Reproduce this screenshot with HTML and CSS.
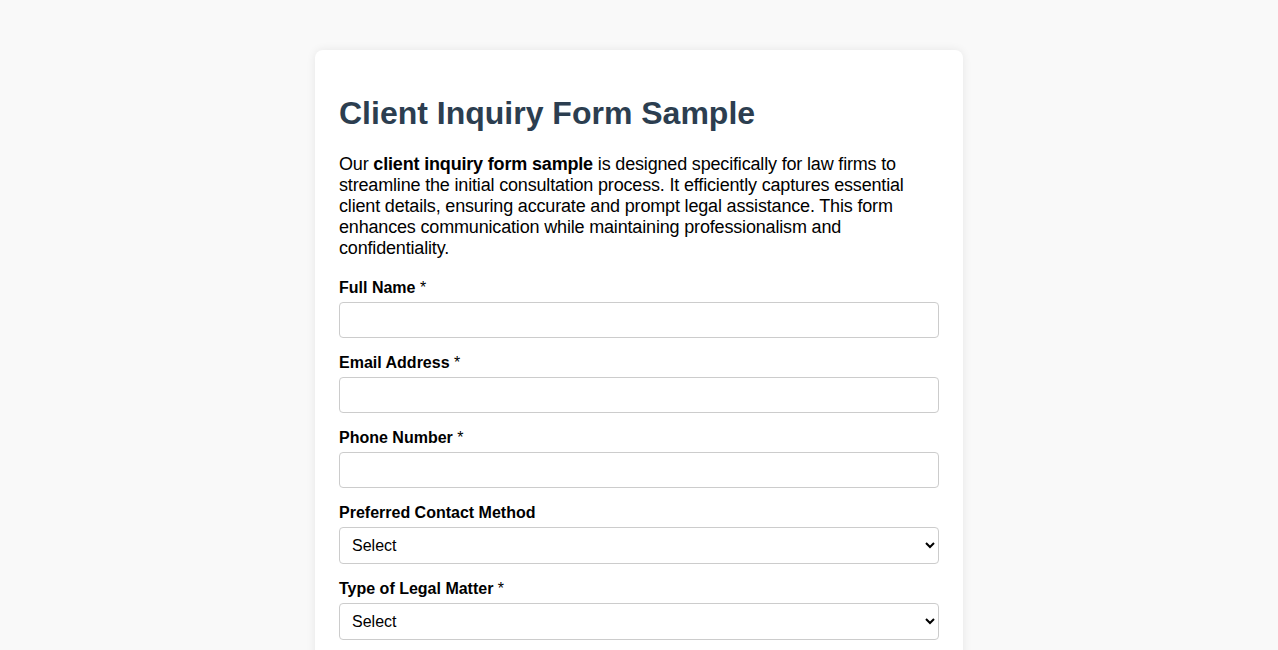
FILE: index.html
```html
<!DOCTYPE html>
<html lang="en">
<head>
<meta charset="utf-8">
<title>Client Inquiry Form Sample</title>
<link rel="stylesheet" href="styles.css">
</head>
<body>
<div class="container">
  <h1 class="title">Client Inquiry Form Sample</h1>
  <p class="intro">Our <strong>client inquiry form sample</strong> is designed specifically for law firms to streamline the initial consultation process. It efficiently captures essential client details, ensuring accurate and prompt legal assistance. This form enhances communication while maintaining professionalism and confidentiality.</p>
  <form class="form">
    <div class="group">
      <label class="label" for="name">Full Name <span class="req">*</span></label>
      <input class="field" type="text" id="name">
    </div>
    <div class="group">
      <label class="label" for="email">Email Address <span class="req">*</span></label>
      <input class="field" type="email" id="email">
    </div>
    <div class="group">
      <label class="label" for="phone">Phone Number <span class="req">*</span></label>
      <input class="field" type="tel" id="phone">
    </div>
    <div class="group">
      <label class="label" for="contact">Preferred Contact Method</label>
      <select class="field select" id="contact">
        <option>Select</option>
        <option>Email</option>
        <option>Phone</option>
      </select>
    </div>
    <div class="group">
      <label class="label" for="matter">Type of Legal Matter <span class="req">*</span></label>
      <select class="field select" id="matter">
        <option>Select</option>
        <option>Family Law</option>
        <option>Criminal Law</option>
      </select>
    </div>
    <div class="group">
      <label class="label" for="desc">Description of Issue <span class="req">*</span></label>
      <textarea class="field" id="desc" rows="4"></textarea>
    </div>
  </form>
</div>
</body>
</html>
```
FILE: styles.css
```css
body {
  margin: 0;
  padding: 20px;
  background: #f9f9f9;
  font-family: "Liberation Sans", Arial, sans-serif;
  color: #000;
}
.container {
  max-width: 600px;
  margin: 30px auto;
  padding: 24px;
  background: #fff;
  border-radius: 8px;
  box-shadow: 0 0 10px rgba(0, 0, 0, 0.08);
}
.title {
  font-size: 32px;
  color: #2c3e50;
  margin: 21px 0 22px;
}
.intro {
  font-size: 18px;
  line-height: 21px;
  letter-spacing: -0.17px;
  margin: 22px 0 20px;
}
.group {
  margin-bottom: 16px;
}
.label {
  display: block;
  font-weight: bold;
  font-size: 16px;
  margin-bottom: 5px;
}
.req {
  font-weight: normal;
}
.field {
  display: block;
  width: 100%;
  box-sizing: border-box;
  padding: 8px;
  font-size: 16px;
  font-family: "Liberation Sans", Arial, sans-serif;
  border: 1px solid #ccc;
  border-radius: 4px;
  background: #fff;
  color: #000;
}
.select {
  height: 37px;
}
```
